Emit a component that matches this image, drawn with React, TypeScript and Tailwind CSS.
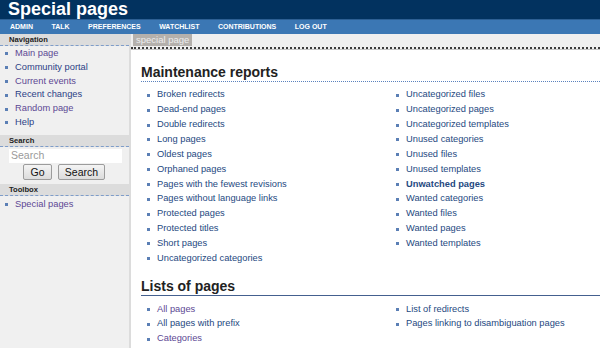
const navTabs = ['Admin', 'Talk', 'Preferences', 'Watchlist', 'Contributions', 'Log out'];

type Link = { label: string; visited?: boolean; bold?: boolean };

const sideNav: Link[] = [
    { label: 'Main page', visited: true },
    { label: 'Community portal' },
    { label: 'Current events', visited: true },
    { label: 'Recent changes' },
    { label: 'Random page', visited: true },
    { label: 'Help' }
];

const maintenanceLeft: Link[] = [
    { label: 'Broken redirects' },
    { label: 'Dead-end pages' },
    { label: 'Double redirects' },
    { label: 'Long pages' },
    { label: 'Oldest pages' },
    { label: 'Orphaned pages' },
    { label: 'Pages with the fewest revisions' },
    { label: 'Pages without language links' },
    { label: 'Protected pages' },
    { label: 'Protected titles' },
    { label: 'Short pages' },
    { label: 'Uncategorized categories' }
];

const maintenanceRight: Link[] = [
    { label: 'Uncategorized files' },
    { label: 'Uncategorized pages' },
    { label: 'Uncategorized templates' },
    { label: 'Unused categories' },
    { label: 'Unused files' },
    { label: 'Unused templates' },
    { label: 'Unwatched pages', bold: true },
    { label: 'Wanted categories' },
    { label: 'Wanted files' },
    { label: 'Wanted pages' },
    { label: 'Wanted templates' }
];

const listsLeft: Link[] = [
    { label: 'All pages', visited: true },
    { label: 'All pages with prefix' },
    { label: 'Categories', visited: true }
];

const listsRight: Link[] = [
    { label: 'List of redirects' },
    { label: 'Pages linking to disambiguation pages' }
];

const LinkItem = ({ item }: { item: Link }) => (
    <li className="flex h-[14.85px] items-center">
        <span className="ml-[6px] mr-[7px] h-[3px] w-[3px] bg-[#5b7fb5]" />
        <a
            href="#"
            className={`${item.visited ? 'text-[#5d4894]' : 'text-[#25497f]'} ${item.bold ? 'font-bold' : ''}`}
        >
            {item.label}
        </a>
    </li>
);

const LinkColumns = ({ left, right }: { left: Link[]; right: Link[] }) => (
    <div className="grid grid-cols-[249px_1fr] text-[9.3px]">
        <ul>
            {left.map((item) => (
                <LinkItem key={item.label} item={item} />
            ))}
        </ul>
        <ul>
            {right.map((item) => (
                <LinkItem key={item.label} item={item} />
            ))}
        </ul>
    </div>
);

const PortletHeader = ({ title }: { title: string }) => (
    <div className="h-[12px] border-b border-dashed border-[#7d9cc9] bg-[#dcdcdc] pl-[9px] text-[7.6px] font-bold leading-[11px] text-[#222]">
        {title}
    </div>
);

export default function App() {
    return (
        <div className="flex h-[348px] w-[600px] flex-col overflow-hidden bg-white font-['Liberation_Sans',Arial,sans-serif]">
            <header className="h-[19px] bg-[#02325f] pl-[8px] text-[18px] font-bold leading-[19px] text-white">
                Special pages
            </header>
            <nav className="flex h-[15px] items-center gap-[18.5px] border-t border-[#2d5f93] bg-[#3b77b4] pl-[10px] text-[7px] font-bold uppercase text-white">
                {navTabs.map((tab) => (
                    <span key={tab}>{tab}</span>
                ))}
            </nav>

            <div className="flex min-h-0 flex-1">
                <aside className="w-[131px] shrink-0 border-r-2 border-[#dcdcdc] bg-[#f0f0f0]">
                    <PortletHeader title="Navigation" />
                    <ul className="pt-[1px] text-[9.3px]">
                        {sideNav.map((item) => (
                            <li key={item.label} className="flex h-[13.8px] items-center">
                                <span className="ml-[5px] mr-[7px] h-[3px] w-[3px] bg-[#5b7fb5]" />
                                <a
                                    href="#"
                                    className={item.visited ? 'text-[#5d4894]' : 'text-[#2c3f86]'}
                                >
                                    {item.label}
                                </a>
                            </li>
                        ))}
                    </ul>

                    <div className="mt-[5px]">
                        <PortletHeader title="Search" />
                    </div>
                    <div className="px-[9px] pt-[2px]">
                        <input
                            type="text"
                            placeholder="Search"
                            className="block h-[14px] w-[113px] bg-white px-[2px] text-[10.5px] outline-none placeholder:text-[#9a9a9a]"
                        />
                        <div className="mt-[1px] flex justify-center gap-[6px] pr-[1px]">
                            <button
                                type="button"
                                className="h-[16px] w-[29px] rounded-[2px] border border-[#9c9c9c] bg-gradient-to-b from-[#f4f4f4] to-[#dcdcdc] text-[10.5px] leading-none text-[#111]"
                            >
                                Go
                            </button>
                            <button
                                type="button"
                                className="h-[16px] w-[47px] rounded-[2px] border border-[#9c9c9c] bg-gradient-to-b from-[#f4f4f4] to-[#dcdcdc] text-[10.5px] leading-none text-[#111]"
                            >
                                Search
                            </button>
                        </div>
                    </div>

                    <div className="mt-[4px]">
                        <PortletHeader title="Toolbox" />
                    </div>
                    <ul className="pt-[2px] text-[9.3px]">
                        <li className="flex h-[13.8px] items-center">
                            <span className="ml-[5px] mr-[7px] h-[3px] w-[3px] bg-[#5b7fb5]" />
                            <a href="#" className="text-[#5d4894]">
                                Special pages
                            </a>
                        </li>
                    </ul>
                </aside>

                <main className="min-w-0 flex-1">
                    <div className="border-b border-[#c4c4c4]">
                        <div className="flex h-[15px] items-start border-b-2 border-dotted border-[#3a3a3a] bg-[#efefef] pl-[2px]">
                            <span className="h-[12px] bg-[#b4b0ac] px-[3px] text-[9.5px] leading-[12px] text-[#ececec]">
                                special page
                            </span>
                        </div>
                    </div>

                    <div className="pl-[10px] pt-[14px]">
                        <h2 className="border-b border-dotted border-[#5b82bd] pb-[1px] text-[14px] font-bold leading-[16px] text-[#222]">
                            Maintenance reports
                        </h2>
                        <div className="pt-[6px]">
                            <LinkColumns left={maintenanceLeft} right={maintenanceRight} />
                        </div>

                        <h2 className="mt-[12px] border-b-[1.5px] border-[#44608f] pb-[1px] text-[14px] font-bold leading-[16px] text-[#222]">
                            Lists of pages
                        </h2>
                        <div className="pt-[6px]">
                            <LinkColumns left={listsLeft} right={listsRight} />
                        </div>
                    </div>
                </main>
            </div>
        </div>
    );
}
